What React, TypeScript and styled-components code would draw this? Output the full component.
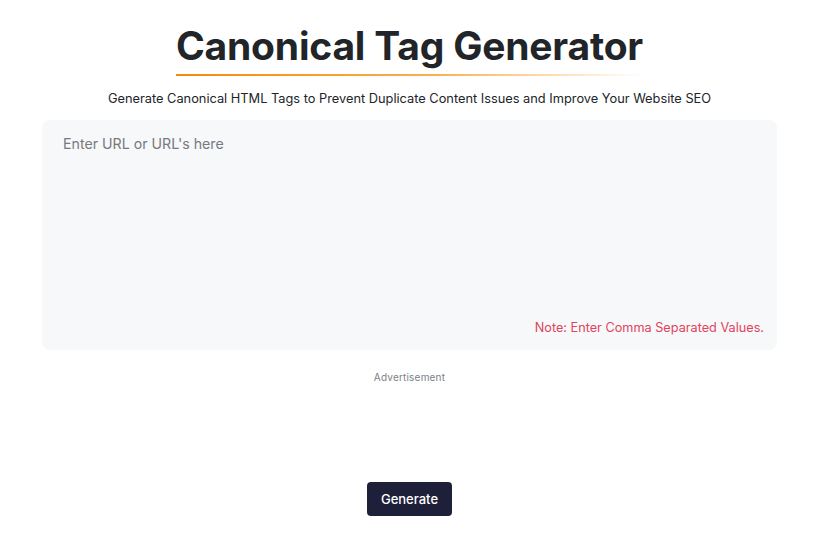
import React, { useState } from 'react'
import styled, { createGlobalStyle } from 'styled-components'

const GlobalStyle = createGlobalStyle`
	body {
		margin: 0;
		background: #ffffff;
		font-family: Inter, 'Noto Sans', sans-serif;
		color: #212529;
	}
`

const Page = styled.div`
	box-sizing: border-box;
	width: 819px;
	display: flex;
	flex-direction: column;
	align-items: center;
	padding: 23px 42px 0;
`

const Title = styled.h1`
	margin: 0;
	font-size: 39px;
	font-weight: 700;
	line-height: 46px;
	color: #212529;
	letter-spacing: -0.2px;
	position: relative;
	padding-bottom: 7px;

	&::after {
		content: '';
		position: absolute;
		left: 0;
		right: 0;
		bottom: 0;
		height: 2px;
		background: linear-gradient(90deg, #f58a07 0%, #f8b04f 55%, rgba(255, 255, 255, 0) 100%);
	}
`

const Subtitle = styled.p`
	margin: 14px 0 0;
	font-size: 12.8px;
	line-height: 18px;
	color: #212529;
`

const InputBox = styled.div`
	position: relative;
	width: 100%;
	height: 230px;
	margin-top: 12px;
	background: #f7f8fa;
	border-radius: 8px;
`

const UrlInput = styled.textarea`
	box-sizing: border-box;
	width: 100%;
	height: 100%;
	border: none;
	background: transparent;
	resize: none;
	outline: none;
	padding: 14px 21px;
	font-family: Inter, 'Noto Sans', sans-serif;
	font-size: 14.2px;
	line-height: 20px;
	color: #212529;

	&::placeholder {
		color: #767a80;
	}
`

const Note = styled.span`
	position: absolute;
	right: 13px;
	bottom: 15px;
	font-size: 12.7px;
	color: #e2445c;
`

const AdLabel = styled.div`
	margin-top: 21px;
	font-size: 10px;
	color: #7a7f87;
	letter-spacing: 0.2px;
`

const GenerateButton = styled.button`
	margin-top: 99px;
	height: 34px;
	padding: 0 14px;
	border: none;
	border-radius: 4px;
	background: #1e2039;
	color: #ffffff;
	font-family: Inter, 'Noto Sans', sans-serif;
	font-size: 13px;
	font-weight: 500;
	cursor: pointer;
`

const App: React.FC = () => {
	const [urls, setUrls] = useState('')
	return (
		<>
			<GlobalStyle />
			<Page>
				<Title>Canonical Tag Generator</Title>
				<Subtitle>
					Generate Canonical HTML Tags to Prevent Duplicate Content Issues and Improve Your Website SEO
				</Subtitle>
				<InputBox>
					<UrlInput
						placeholder="Enter URL or URL's here"
						value={urls}
						onChange={(e) => setUrls(e.target.value)}
					/>
					<Note>Note: Enter Comma Separated Values.</Note>
				</InputBox>
				<AdLabel>Advertisement</AdLabel>
				<GenerateButton>Generate</GenerateButton>
			</Page>
		</>
	)
}

export default App
